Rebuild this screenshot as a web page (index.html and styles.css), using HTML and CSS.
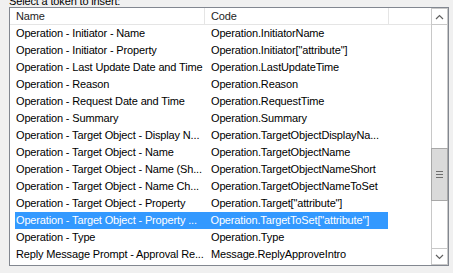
FILE: index.html
```html
<!DOCTYPE html>
<html lang="en">
<head>
    <meta charset="UTF-8">
    <title>Select a token</title>
    <link rel="stylesheet" href="styles.css">
</head>
<body>
    <div class="label">Select a token to insert:</div>

    <div class="list-box">
        <div class="list">
            <div class="header">
                <div class="col name">Name</div>
                <div class="col code">Code</div>
                <div class="col rest"></div>
            </div>
            <div class="rows">
                <div class="row"><span class="name">Operation - Initiator - Name</span><span class="code">Operation.InitiatorName</span></div>
                <div class="row"><span class="name">Operation - Initiator - Property</span><span class="code">Operation.Initiator["attribute"]</span></div>
                <div class="row"><span class="name">Operation - Last Update Date and Time</span><span class="code">Operation.LastUpdateTime</span></div>
                <div class="row"><span class="name">Operation - Reason</span><span class="code">Operation.Reason</span></div>
                <div class="row"><span class="name">Operation - Request Date and Time</span><span class="code">Operation.RequestTime</span></div>
                <div class="row"><span class="name">Operation - Summary</span><span class="code">Operation.Summary</span></div>
                <div class="row"><span class="name">Operation - Target Object - Display N...</span><span class="code">Operation.TargetObjectDisplayNa...</span></div>
                <div class="row"><span class="name">Operation - Target Object - Name</span><span class="code">Operation.TargetObjectName</span></div>
                <div class="row"><span class="name">Operation - Target Object - Name (Sh...</span><span class="code">Operation.TargetObjectNameShort</span></div>
                <div class="row"><span class="name">Operation - Target Object - Name Ch...</span><span class="code">Operation.TargetObjectNameToSet</span></div>
                <div class="row"><span class="name">Operation - Target Object - Property</span><span class="code">Operation.Target["attribute"]</span></div>
                <div class="row selected"><span class="name">Operation - Target Object - Property ...</span><span class="code">Operation.TargetToSet["attribute"]</span></div>
                <div class="row"><span class="name">Operation - Type</span><span class="code">Operation.Type</span></div>
                <div class="row"><span class="name">Reply Message Prompt - Approval Re...</span><span class="code">Message.ReplyApproveIntro</span></div>
            </div>
        </div>

        <div class="scrollbar">
            <div class="arrow">
                <svg width="9" height="6" viewBox="0 0 9 6"><path d="M1 5 L4.5 1.5 L8 5" fill="none" stroke="#606060" stroke-width="1.2"/></svg>
            </div>
            <div class="track">
                <div class="thumb"><span class="grip"></span></div>
            </div>
            <div class="arrow">
                <svg width="9" height="6" viewBox="0 0 9 6"><path d="M1 1 L4.5 4.5 L8 1" fill="none" stroke="#606060" stroke-width="1.2"/></svg>
            </div>
        </div>
    </div>
</body>
</html>
```

FILE: styles.css
```css
body {
    margin: 0;
    background-color: #f0f0f0;
    font-family: 'Liberation Sans', Arial, sans-serif;
    font-size: 11px;
    letter-spacing: -0.15px;
    color: #000000;
}
.label {
    height: 13px;
    line-height: 13px;
    margin-top: -5px;
    margin-bottom: -1px;
    padding-left: 9px;
}
.list-box {
    display: flex;
    width: 438px;
    height: 257px;
    margin-left: 9px;
    border: 1px solid #828790;
    background-color: #ffffff;
}
.list {
    flex: 1;
    overflow: hidden;
}
.header {
    display: flex;
    height: 16px;
    border-bottom: 1px solid #e5e5e5;
}
.header .col {
    line-height: 16px;
    padding-left: 6px;
    border-right: 1px solid #e5e5e5;
    color: #1e1e1e;
}
.header .name {
    width: 188px;
}
.header .code {
    width: 177px;
}
.header .rest {
    flex: 1;
    border-right: none;
}
.row {
    display: flex;
    height: 17px;
    line-height: 17px;
    white-space: nowrap;
}
.row .name {
    width: 189px;
    padding-left: 6px;
}
.row .code {
    width: 178px;
    padding-left: 6px;
}
.row.selected {
    margin-left: 5px;
    width: 373px;
    background-color: #3399ff;
    color: #ffffff;
}
.row.selected .name {
    width: 189px;
    padding-left: 1px;
}
.scrollbar {
    display: flex;
    flex-direction: column;
    width: 17px;
    background-color: #ffffff;
}
.arrow {
    display: flex;
    align-items: center;
    justify-content: center;
    height: 15px;
    border: 1px solid #c8c8c8;
    background-color: #ffffff;
}
.track {
    flex: 1;
    padding-top: 123px;
    border-left: 1px solid #c8c8c8;
    border-right: 1px solid #c8c8c8;
}
.thumb {
    display: flex;
    align-items: center;
    justify-content: center;
    height: 51px;
    border: 1px solid #a8a8a8;
    margin: 0 -1px;
    background-color: #dadada;
}
.grip {
    width: 7px;
    height: 7px;
    background: repeating-linear-gradient(#6e6e6e 0 1px, transparent 1px 3px);
}
```
